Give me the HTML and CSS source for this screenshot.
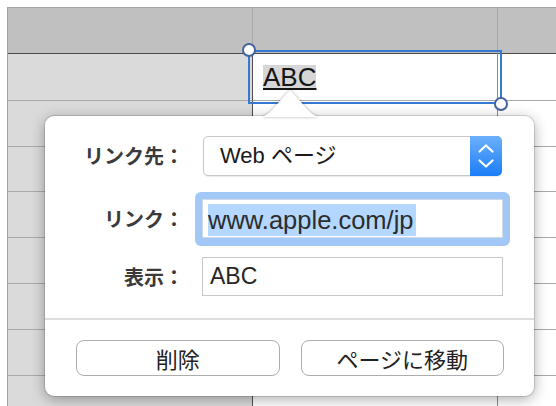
FILE: index.html
```html
<!DOCTYPE html>
<html lang="ja">
<head>
<meta charset="utf-8">
<title>リンク</title>
<link rel="stylesheet" href="styles.css">
</head>
<body>
<div class="sheet">
  <div class="cell hdr c1"></div><div class="cell hdr c2"></div><div class="cell hdr c3"></div>
  <div class="cell c1"></div><div class="cell c2 active"><span class="celltext">ABC</span></div><div class="cell c3"></div>
  <div class="cell c1"></div><div class="cell c2"></div><div class="cell c3"></div>
  <div class="cell c1"></div><div class="cell c2"></div><div class="cell c3"></div>
  <div class="cell c1"></div><div class="cell c2"></div><div class="cell c3"></div>
  <div class="cell c1"></div><div class="cell c2"></div><div class="cell c3"></div>
  <div class="cell c1"></div><div class="cell c2"></div><div class="cell c3"></div>
  <div class="cell c1"></div><div class="cell c2"></div><div class="cell c3"></div>
  <div class="cell c1"></div><div class="cell c2"></div><div class="cell c3"></div>
</div>

<div class="selbox"></div>
<div class="handle h-tl"></div>
<div class="handle h-br"></div>

<div class="popup">
  <div class="row row1">
    <div class="label">リンク先：</div>
    <div class="popbtn">
      <span class="popbtn-text">Web ページ</span>
      <span class="stepper">
        <svg width="32" height="40" viewBox="0 0 32 40">
          <polyline points="9.5,15.5 16,9.5 22.5,15.5" fill="none" stroke="#fff" stroke-width="2.2" stroke-linecap="round" stroke-linejoin="round"/>
          <polyline points="9.5,24.5 16,30.5 22.5,24.5" fill="none" stroke="#fff" stroke-width="2.2" stroke-linecap="round" stroke-linejoin="round"/>
        </svg>
      </span>
    </div>
  </div>
  <div class="row row2">
    <div class="label">リンク：</div>
    <div class="ring">
      <div class="field url"><span class="selected">www.apple.com/jp</span></div>
    </div>
  </div>
  <div class="row row3">
    <div class="label">表示：</div>
    <div class="field plain">ABC</div>
  </div>
  <div class="sep"></div>
  <div class="btns">
    <div class="btn">削除</div>
    <div class="btn">ページに移動</div>
  </div>
</div>

<svg class="arrow" width="80" height="33" viewBox="250 84 80 33">
  <path d="M 254 118 C 263 118, 267 115, 272 110 L 287.5 92.5 Q 290 89.2 292.5 92.5 L 308 110 C 313 115, 317 118, 326 118 Z" fill="#ffffff"/>
</svg>
</body>
</html>
```

FILE: styles.css
```css
html, body {
  margin: 0;
  padding: 0;
  width: 556px;
  height: 406px;
  overflow: hidden;
  background: #ffffff;
}

body {
  position: relative;
  font-family: "Liberation Sans", "Noto Sans CJK JP", sans-serif;
}

/* ---------- spreadsheet ---------- */
.sheet {
  margin: 7px 0 0 7px;
  border-top: 1px solid #a3a3a3;
  border-left: 1px solid #a3a3a3;
  display: grid;
  grid-template-columns: 245px 245px 1fr;
  grid-template-rows: 46px 47px 46px 45px 46px 46px 46px 46px 46px;
}

.cell {
  box-sizing: border-box;
  border-bottom: 1px solid #a9a9a9;
  border-right: 1px solid #8c8c8c;
  background: #ffffff;
}

.cell.c1 {
  background: #dadada;
  border-right-color: #505050;
}

.cell.c3 {
  border-right: none;
}

.cell.hdr {
  background: #bfc0bf;
  border-bottom: 1px solid #4a4a4a;
  border-right-color: #a8a8a8;
}

.cell.active {
  padding: 11px 0 0 10px;
}

.celltext {
  display: inline-block;
  font-size: 26px;
  line-height: 24px;
  height: 24px;
  color: #161616;
  background: #d6d6d6;
  text-decoration: underline;
  text-decoration-thickness: 1.5px;
  text-underline-offset: 2px;
}

/* ---------- selection overlay ---------- */
.selbox {
  position: absolute;
  left: 248px;
  top: 50px;
  width: 254px;
  height: 54px;
  box-sizing: border-box;
  border: 2px solid #3579d2;
}

.handle {
  position: absolute;
  width: 14px;
  height: 14px;
  box-sizing: border-box;
  border-radius: 50%;
  border: 2.5px solid #46639f;
  background: #ffffff;
}

.h-tl { left: 242px; top: 43px; }
.h-br { left: 494px; top: 97px; }

/* ---------- popover ---------- */
.popup {
  position: absolute;
  left: 45px;
  top: 116px;
  width: 489px;
  height: 280px;
  box-sizing: border-box;
  background: #ffffff;
  border-radius: 9px;
  box-shadow: 0 0 0 1px rgba(0, 0, 0, 0.12), 0 3px 14px rgba(0, 0, 0, 0.34);
  padding-top: 20px;
}

.arrow {
  position: absolute;
  left: 250px;
  top: 84px;
  overflow: hidden;
  filter: drop-shadow(0 0 1.5px rgba(0, 0, 0, 0.32));
}

.row {
  display: flex;
  align-items: center;
  padding-right: 31px;
}

.row2 { margin-top: 23px; }
.row3 { margin-top: 19px; }

.label {
  width: 139px;
  flex: none;
  margin-right: 18px;
  text-align: right;
  font-family: "Noto Sans CJK JP", sans-serif;
  font-weight: 700;
  font-size: 20px;
  line-height: 24px;
  color: #3a3a3a;
}

.popbtn {
  flex: 1;
  margin: 0 1px 0 1px;
  height: 40px;
  box-sizing: border-box;
  border: 1px solid #c8c8c8;
  border-radius: 5px;
  box-shadow: 0 1px 1px rgba(0, 0, 0, 0.08);
  display: flex;
  align-items: center;
  background: #ffffff;
}

.popbtn-text {
  flex: 1;
  padding-left: 16px;
  font-size: 22px;
  line-height: 26px;
  color: #1a1a1a;
}

.stepper {
  align-self: stretch;
  width: 32px;
  height: 40px;
  margin: -1px -1px -1px 0;
  border-radius: 0 5px 5px 0;
  background: linear-gradient(#6cb0fa, #1a7df7);
  display: flex;
}

.ring {
  flex: 1;
  margin: -7px -7px -8px -7px;
  padding: 7px 7px 8px 7px;
  border-radius: 6px;
  background: #a1c8f6;
}

.field {
  box-sizing: border-box;
  height: 39px;
  background: #ffffff;
  color: #2c2c2c;
}

.field.url {
  border: 1px solid #cfd9e6;
  padding: 4px 0 0 5px;
  font-size: 25.5px;
}

.selected {
  display: inline-block;
  height: 32px;
  line-height: 32px;
  padding-right: 2px;
  background: #b3d7ff;
}

.field.plain {
  flex: 1;
  border: 1px solid #c8c8c8;
  padding-left: 7px;
  font-size: 23px;
  line-height: 37px;
  color: #262626;
}

.sep {
  margin-top: 22px;
  height: 2px;
  background: #dedede;
}

.btns {
  display: flex;
  gap: 21px;
  margin-top: 20px;
  padding: 0 30px 0 31px;
}

.btn {
  flex: 1;
  height: 36px;
  box-sizing: border-box;
  border: 1.5px solid #adadad;
  border-radius: 8px;
  background: #ffffff;
  display: flex;
  align-items: center;
  justify-content: center;
  font-family: "Noto Sans CJK JP", sans-serif;
  font-size: 22px;
  line-height: 26px;
  color: #222222;
}
```
